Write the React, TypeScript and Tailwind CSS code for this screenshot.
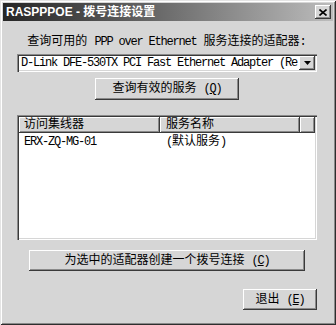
const raised =
  "shadow-[inset_-1px_-1px_0_#3a3a3a,inset_1px_1px_0_#ffffff,inset_-2px_-2px_0_#8a8a8a]";
const sunken =
  "shadow-[inset_1px_1px_0_#8a8a8a,inset_2px_2px_0_#3a3a3a,inset_-1px_-1px_0_#ffffff,inset_-2px_-2px_0_#d6d6d6]";

const font = { fontFamily: '"Liberation Mono", "Noto Sans CJK SC", monospace' };

const Latin = ({ children }: { children: React.ReactNode }) => (
  <span className="tracking-[-1.2px]">{children}</span>
);

const Key = ({ k }: { k: string }) => (
  <span className="tracking-[-1.2px]">
    (<span className="underline underline-offset-1">{k}</span>)
  </span>
);

const Button = ({
  className,
  children,
}: {
  className: string;
  children: React.ReactNode;
}) => (
  <div
    className={`${raised} bg-[#d6d6d6] flex items-center justify-center text-[12px] leading-[14px] text-black ${className}`}
  >
    <span className="whitespace-pre">{children}</span>
  </div>
);

export default function App() {
  return (
    <div
      className="w-[336px] h-[325px] bg-[#d6d6d6] p-[3px] flex flex-col shadow-[inset_1px_1px_0_#e4e4e4,inset_-1px_-1px_0_#2e2e2e,inset_2px_2px_0_#ffffff,inset_-2px_-2px_0_#8a8a8a]"
      style={font}
    >
      {/* title bar */}
      <div className="h-[18px] flex items-center justify-between pl-[3px] pr-[2px] bg-[linear-gradient(to_right,#262626,#666666_45%,#bcbcbc)]">
        <span
          className="text-white font-bold text-[12px] leading-[14px]"
          style={{ fontFamily: '"Liberation Sans", "Noto Sans CJK SC", sans-serif' }}
        >
          RASPPPOE - 拨号连接设置
        </span>
        <div className={`${raised} w-[16px] h-[14px] bg-[#d6d6d6] flex items-center justify-center`}>
          <svg width="8" height="7" viewBox="0 0 8 7">
            <path d="M0.5 0.5 L7.5 6.5 M7.5 0.5 L0.5 6.5" stroke="#000" strokeWidth="1.6" />
          </svg>
        </div>
      </div>

      <div className="flex flex-col pl-[14px] pr-[16px]">
        <div className="mt-[14px] text-center text-[12px] leading-[14px] text-black">
          查询可用的 <Latin>PPP over Ethernet</Latin> 服务连接的适配器:
        </div>

        {/* combobox */}
        <div className={`${sunken} mt-[5px] h-[18px] bg-white flex items-center pl-[4px] pr-[2px]`}>
          <span className="flex-1 overflow-hidden whitespace-nowrap text-[12px] leading-[14px] tracking-[-1.2px] text-black">
            D-Link DFE-530TX PCI Fast Ethernet Adapter (Re
          </span>
          <div className={`${raised} w-[16px] h-[14px] bg-[#d6d6d6] flex items-center justify-center`}>
            <svg width="7" height="4" viewBox="0 0 7 4">
              <path d="M0 0 H7 L3.5 4 Z" fill="#000" />
            </svg>
          </div>
        </div>

        <Button className="mt-[6px] self-center w-[144px] h-[22px]">
          查询有效的服务 <Key k="Q" />
        </Button>

        {/* list view */}
        <div className={`${sunken} mt-[15px] h-[125px] bg-white p-[2px] flex flex-col`}>
          <div className="flex h-[16px] text-[12px] leading-[14px] text-black">
            <div className={`${raised} bg-[#d6d6d6] w-[141px] pl-[5px] pt-[1px]`}>访问集线器</div>
            <div className={`${raised} bg-[#d6d6d6] w-[140px] pl-[6px] pt-[1px]`}>服务名称</div>
            <div className={`${raised} bg-[#d6d6d6] flex-1`} />
          </div>
          <div className="flex h-[14px] mt-[2px] text-[12px] leading-[14px] text-black">
            <div className="w-[141px] pl-[5px] tracking-[-1.2px]">ERX-ZQ-MG-01</div>
            <div className="pl-[6px]">
              <span className="tracking-[-1.2px]">(</span>默认服务<span className="tracking-[-1.2px]">)</span>
            </div>
          </div>
        </div>

        <Button className="mt-[10px] self-center w-[276px] h-[21px]">
          为选中的适配器创建一个拨号连接 <Key k="C" />
        </Button>

        <Button className="mt-[18px] self-end w-[74px] h-[21px]">
          退出 <Key k="E" />
        </Button>
      </div>
    </div>
  );
}
